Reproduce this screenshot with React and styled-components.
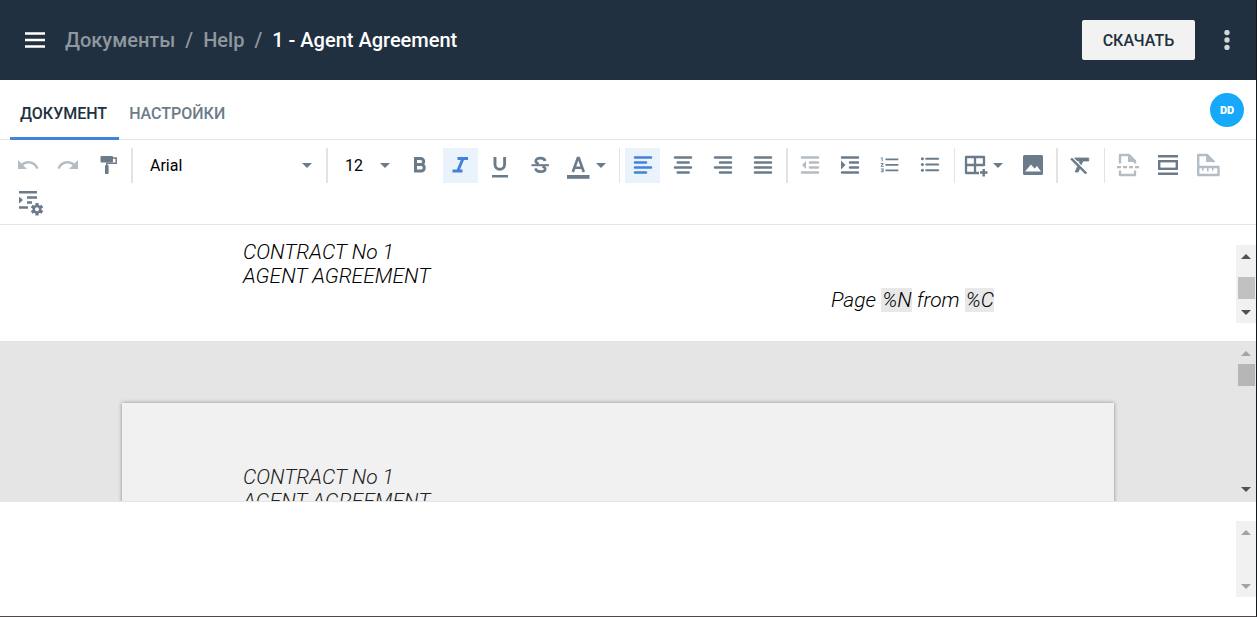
import React from "react";
import styled, { createGlobalStyle, css } from "styled-components";

const slate = "#6b7b8a";
const blue = "#4282d8";

const GlobalStyle = createGlobalStyle`
  *, *::before, *::after { box-sizing: border-box; }
  body {
    margin: 0;
    background: #fff;
    color: #000;
    font-family: Roboto, "Liberation Sans", sans-serif;
    font-size: 16px;
  }
  button, select { font: inherit; }
`;

const Shell = styled.div`
  display: flex;
  flex-direction: column;
  height: 100vh;
  border-right: 1px solid #15181b;
  border-bottom: 1px solid #4c484b;
`;

const TopBar = styled.header`
  display: flex;
  flex: none;
  align-items: center;
  height: 80px;
  padding: 0 19px 0 20px;
  background: #213040;
`;

const BareButton = styled.button`
  display: flex;
  align-items: center;
  justify-content: center;
  padding: 0;
  border: 0;
  background: none;
  cursor: pointer;
`;

const MenuButton = styled(BareButton)`
  width: 30px;
  height: 40px;
`;

const MoreButton = styled(BareButton)`
  width: 20px;
  height: 40px;
`;

const Breadcrumbs = styled.nav`
  flex: 1;
  display: flex;
  gap: 10px;
  margin-left: 15px;
  font-size: 20px;
  line-height: 24px;
  font-weight: 500;
  white-space: nowrap;
  color: #8f979f;
`;

const Crumb = styled.a`
  color: inherit;
  text-decoration: none;
`;

const CurrentCrumb = styled.span`
  color: #fff;
`;

const DownloadButton = styled.button`
  min-width: 113px;
  height: 40px;
  padding: 0 20px;
  margin-right: 22px;
  border: 0;
  border-radius: 2px;
  background: #f2f2f2;
  color: #213040;
  font-size: 16px;
  font-weight: 500;
  cursor: pointer;
`;

const TabBar = styled.div`
  display: flex;
  flex: none;
  align-items: center;
  justify-content: space-between;
  height: 60px;
  padding: 0 12px 0 10px;
  border-bottom: 1px solid #e5e5e5;
`;

const Tabs = styled.nav`
  display: flex;
  align-self: stretch;
`;

const Tab = styled.a`
  position: relative;
  padding: 0 12px 0 10px;
  line-height: 67px;
  font-size: 16px;
  font-weight: 500;
  text-decoration: none;
  color: ${(p) => (p.$active ? "#213040" : slate)};
  ${(p) =>
    p.$active &&
    css`
      &::after {
        content: "";
        position: absolute;
        left: 0;
        right: 0;
        top: 57px;
        height: 3px;
        background: ${blue};
      }
    `}
`;

const Avatar = styled.div`
  width: 34px;
  height: 34px;
  border-radius: 50%;
  background: #17a9f9;
  color: #fff;
  font-size: 11px;
  font-weight: 900;
  line-height: 35px;
  text-align: center;
`;

const Toolbar = styled.div`
  display: flex;
  flex: none;
  flex-wrap: wrap;
  gap: 2px 0;
  padding: 8px 10px 4px;
  border-bottom: 1px solid #e5e5e5;
`;

const Group = styled.div`
  display: flex;
  gap: 5px;
`;

const Separator = styled.div`
  width: ${(p) => (p.$thin ? 1 : 2)}px;
  height: 35px;
  margin: 0 5px 0 6px;
  background: #e3e3e3;
`;

const ToolButton = styled.button`
  display: flex;
  align-items: center;
  width: ${(p) => (p.$wide ? 50 : 35)}px;
  height: 35px;
  padding: 0;
  border: 0;
  background: ${(p) => (p.$active ? "#eaf2fc" : "transparent")};
  color: ${(p) => (p.$active ? blue : slate)};
  cursor: pointer;
  &:disabled svg { opacity: 0.5; }
  svg + svg { margin-left: -2px; }
`;

const SelectBox = styled.div`
  display: flex;
  position: relative;
  width: ${(p) => p.$width}px;
  height: 35px;
  svg {
    position: absolute;
    right: 8px;
    top: 15px;
    color: ${slate};
    pointer-events: none;
  }
`;

const Select = styled.select`
  appearance: none;
  width: 100%;
  padding: 0 20px 0 12px;
  border: 0;
  background: none;
  color: #000;
`;

const Pane = styled.section`
  display: flex;
  flex: none;
  height: ${(p) => p.$height}px;
`;

const Workspace = styled.main`
  display: flex;
  flex: 1;
  min-height: 0;
  background: #e5e5e5;
  border-bottom: 1px solid #e5e5e5;
`;

const PaneContent = styled.div`
  flex: 1;
  min-width: 0;
  overflow: hidden;
  padding: ${(p) => p.$top}px 122px 0;
`;

const textBlock = css`
  font-size: 21px;
  line-height: 24px;
  font-style: italic;
  font-weight: 300;
  p { margin: 0; }
`;

const HeaderText = styled.div`
  ${textBlock}
  padding: 0 120px 0 121px;
`;

const Sheet = styled.article`
  ${textBlock}
  height: 900px;
  padding: 62px 120px 0 121px;
  background: #f1f1f1;
  color: #222;
  box-shadow: 0 0 4px rgba(0, 0, 0, 0.4);
`;

const RightLine = styled.p`
  text-align: right;
`;

const Field = styled.span`
  display: inline-block;
  padding-left: 1px;
  background: #e8e8e8;
`;

const Track = styled.div`
  display: flex;
  flex-direction: column;
  align-items: center;
  width: 20px;
  padding: ${(p) => p.$pad}px 0;
  margin: ${(p) => p.$start}px 0 ${(p) => p.$end}px;
  background: ${(p) => (p.$plain ? "transparent" : "#f1f1f1")};
`;

const Arrow = styled(BareButton)`
  width: 20px;
  height: 10px;
  color: ${(p) => (p.disabled ? "#a3a3a3" : "#505050")};
`;

const Rail = styled.div`
  flex: 1;
  width: 17px;
  padding-top: ${(p) => p.$offset}px;
`;

const Thumb = styled.div`
  height: 22px;
  background: ${(p) => p.$color};
`;

function Scrollbar({ pad, start = 0, end = 0, offset, thumb, plain, upOff, downOff }) {
  return (
    <Track $pad={pad} $start={start} $end={end} $plain={plain}>
      <Arrow aria-label="Вверх" disabled={upOff}>
        <svg width="10" height="5" viewBox="0 0 10 5"><path d="M0 5L5 0l5 5z" fill="currentColor" /></svg>
      </Arrow>
      <Rail $offset={offset}>{thumb && <Thumb $color={thumb} />}</Rail>
      <Arrow aria-label="Вниз" disabled={downOff}>
        <svg width="10" height="5" viewBox="0 0 10 5"><path d="M0 0h10L5 5z" fill="currentColor" /></svg>
      </Arrow>
    </Track>
  );
}

const Caret = () => (
  <svg width="10" height="5" viewBox="0 0 10 5" aria-hidden="true">
    <path d="M0 0h10L5 5z" fill="currentColor" />
  </svg>
);

const stroke = { fill: "none", stroke: "currentColor" };

const icons = {
  undo: <path transform="translate(6 5)" d="M12.5 8c-2.65 0-5.05.99-6.9 2.6L2 7v9h9l-3.62-3.62c1.39-1.16 3.16-1.88 5.12-1.88 3.54 0 6.55 2.31 7.6 5.5l2.37-.78C21.08 11.03 17.15 8 12.5 8z" />,
  redo: <path transform="translate(6 5)" d="M18.4 10.6C16.55 8.99 14.15 8 11.5 8c-4.65 0-8.58 3.03-9.96 7.22L3.9 16c1.05-3.19 4.05-5.5 7.6-5.5 1.95 0 3.73.72 5.12 1.88L13 16h9V7l-3.6 3.6z" />,
  painter: <><rect x="10.5" y="8" width="12.5" height="6.5" rx="1" /><path {...stroke} strokeWidth="1.5" d="M23 10h3.2v5.2h-9.4V19" /><rect x="15" y="17" width="3.6" height="9" rx=".8" /></>,
  bold: <path {...stroke} strokeWidth="3" d="M12.5 10.500h5.200a3 3 0 0 1 0 6h-5.200zm0 6h6a3.300 3.300 0 0 1 0 6.500h-6z" />,
  italic: <path {...stroke} strokeWidth="3" d="M14.5 10.5H25M9.5 23h10M20 10.5L14.8 23" />,
  underline: <><path {...stroke} strokeWidth="2.9" d="M12 9v7.5a4.8 4.8 0 0 0 9.6 0V9" /><rect x="9" y="27" width="16" height="2.5" /></>,
  strike: <><path {...stroke} strokeWidth="2.7" d="M22 13c-.2-1.8-2-2.8-4.6-2.8-2.8 0-4.6 1-4.6 2.9 0 1.5 1.2 2.4 3 2.9M19.5 18.5c1.8.6 2.7 1.4 2.7 2.5 0 1.7-1.8 2.6-4.7 2.6-2.8 0-4.7-1.1-4.8-3.2" /><rect x="8.5" y="16.2" width="17.5" height="2" /></>,
  color: <><path {...stroke} strokeWidth="2.6" d="M9.8 24l5-14h1l5 14M11.5 19.8h7.6" /><rect x="4" y="27" width="22.5" height="3.8" /></>,
  left: <path {...stroke} strokeWidth="2.5" strokeLinecap="round" d="M10 9.5h16M10 14.5h11M10 19.5h16M10 24.5h11" />,
  center: <path {...stroke} strokeWidth="2.5" strokeLinecap="round" d="M10 9.5h16M12.7 14.5h11M10 19.5h16M12.7 24.5h11" />,
  right: <path {...stroke} strokeWidth="2.5" strokeLinecap="round" d="M10 9.5h16M15 14.5h11M10 19.5h16M15 24.5h11" />,
  justify: <path {...stroke} strokeWidth="2.5" strokeLinecap="round" d="M10 9.5h16M10 14.5h16M10 19.5h16M10 24.5h16" />,
  outdent: <><path {...stroke} strokeWidth="2.5" strokeLinecap="round" d="M9 9.5h16M17 14.5h8M17 19.5h8M9 24.5h16" /><path d="M13 13v8l-4-4z" /></>,
  indent: <><path {...stroke} strokeWidth="2.5" strokeLinecap="round" d="M9 9.5h16M17 14.5h8M17 19.5h8M9 24.5h16" /><path d="M8 12.5v9l4.5-4.5z" /></>,
  numbered: <path transform="translate(6 5.8) scale(.92)" d="M2 17h2v.5H3v1h1v.5H2v1h3v-4H2v1zm1-9h1V4H2v1h1v3zm-1 3h1.8L2 13.1v.9h3v-1H3.2L5 10.9V10H2v1zm5-6v2h14V5H7zm0 14h14v-2H7v2zm0-6h14v-2H7v2z" />,
  bullets: <><path {...stroke} strokeWidth="2" strokeLinecap="round" d="M13.2 10.8h12M13.2 16.5h12M13.2 22.3h12" /><circle cx="9.4" cy="10.8" r="1.5" /><circle cx="9.4" cy="16.5" r="1.5" /><circle cx="9.4" cy="22.3" r="1.5" /></>,
  table: <><path {...stroke} strokeWidth="2.3" strokeLinejoin="round" d="M19 25H6V9h18v9M6 17h18M15 9v16" /><path {...stroke} strokeWidth="2.4" d="M20 24.5h7.5M23.7 21v7.5" /></>,
  image: <path fillRule="evenodd" d="M9.5 7h17A1.5 1.5 0 0 1 28 8.5v17a1.5 1.5 0 0 1-1.5 1.5h-17A1.5 1.5 0 0 1 8 25.5v-17A1.5 1.5 0 0 1 9.5 7zM10 23.5h16l-4-5.500-2.500 2.500-3.500-4z" />,
  clear: <path transform="translate(5.700 5)" stroke="currentColor" strokeWidth=".8" d="M3.270 5L2 6.270l6.970 6.970L6.500 19h3l1.570-3.660L16.730 21 18 19.730 3.550 5.270 3.270 5zM6 5v.180L8.820 8h2.400l-.720 1.680 2.100 2.100L14.210 8H20V5H6z" />,
  pageBreak: <><path {...stroke} strokeWidth="2.400" strokeLinejoin="round" d="M10 15.500V7h9l6 6v2.500M10 22.500V27h15v-4.500" /><path d="M18 6.500V14h7.500zM7 18h4v2.200H7zm6 0h4v2.200h-4zm6 0h4v2.200h-4zm6 0h4v2.200h-4z" /></>,
  headerFooter: <><path d="M8 7h20v2.500H8zM8 24.500h20V27H8z" /><rect {...stroke} x="9.200" y="13.200" width="17.600" height="7.600" strokeWidth="2.400" /></>,
  pageNumber: <><path {...stroke} strokeWidth="2.400" strokeLinejoin="round" d="M8.200 18V7h9l7 7M8.200 19h20.300v8H8.200z" /><path d="M16 6.500V14h8zM12 20h1.600v2.600H12zm5 0h1.600v3.600H17zm5 0h1.600v2.600H22z" /></>,
  paragraph: <>
    <path {...stroke} strokeWidth="2.400" d="M9 7.300h18M17 12.500h10M17 17.500h5M9 22.500h9" />
    <path d="M9 11.500v7l4-3.500z" />
    <path {...stroke} strokeWidth="3.200" d="M27 18v12.400M21.600 21.100l10.800 6.200M21.600 27.300l10.800-6.200" />
    <circle {...stroke} cx="27" cy="24.200" r="3.200" strokeWidth="2.600" />
    <circle cx="27" cy="24.200" r="2" fill="#fff" />
  </>,
};

function Tool({ name, label, active, disabled, menu }) {
  return (
    <ToolButton aria-label={label} $active={active} $wide={menu} disabled={disabled}>
      <svg width="35" height="35" viewBox="0 0 35 35" fill="currentColor" overflow="visible" aria-hidden="true">
        {icons[name]}
      </svg>
      {menu && <Caret />}
    </ToolButton>
  );
}

export default function App() {
  return (
    <Shell>
      <GlobalStyle />
      <TopBar>
        <MenuButton aria-label="Меню">
          <svg width="20" height="16" viewBox="0 0 20 16" fill="#fff">
            <path d="M0 .300h20v2.500H0zM0 6.800h20v2.500H0zM0 13.200h20v2.500H0z" />
          </svg>
        </MenuButton>
        <Breadcrumbs>
          <Crumb href="#documents">Документы</Crumb>
          <span>/</span>
          <Crumb href="#help">Help</Crumb>
          <span>/</span>
          <CurrentCrumb>1 - Agent Agreement</CurrentCrumb>
        </Breadcrumbs>
        <DownloadButton>СКАЧАТЬ</DownloadButton>
        <MoreButton aria-label="Ещё">
          <svg width="6" height="20" viewBox="0 0 6 20" fill="#d3d6d9">
            <circle cx="3" cy="2.500" r="2.700" />
            <circle cx="3" cy="10" r="2.700" />
            <circle cx="3" cy="17.500" r="2.700" />
          </svg>
        </MoreButton>
      </TopBar>

      <TabBar>
        <Tabs>
          <Tab href="#document" $active>ДОКУМЕНТ</Tab>
          <Tab href="#settings">НАСТРОЙКИ</Tab>
        </Tabs>
        <Avatar>DD</Avatar>
      </TabBar>

      <Toolbar>
        <Group>
          <Tool name="undo" label="Отменить" disabled />
          <Tool name="redo" label="Повторить" disabled />
          <Tool name="painter" label="Формат по образцу" />
        </Group>
        <Separator />
        <SelectBox $width={182}>
          <Select aria-label="Шрифт" defaultValue="Arial">
            <option>Arial</option>
          </Select>
          <Caret />
        </SelectBox>
        <Separator />
        <Group>
          <SelectBox $width={65}>
            <Select aria-label="Размер" defaultValue="12">
              <option>12</option>
            </Select>
            <Caret />
          </SelectBox>
          <Tool name="bold" label="Полужирный" />
          <Tool name="italic" label="Курсив" active />
          <Tool name="underline" label="Подчёркнутый" />
          <Tool name="strike" label="Зачёркнутый" />
          <Tool name="color" label="Цвет текста" menu />
        </Group>
        <Separator $thin />
        <Group>
          <Tool name="left" label="По левому краю" active />
          <Tool name="center" label="По центру" />
          <Tool name="right" label="По правому краю" />
          <Tool name="justify" label="По ширине" />
        </Group>
        <Separator />
        <Group>
          <Tool name="outdent" label="Уменьшить отступ" disabled />
          <Tool name="indent" label="Увеличить отступ" />
          <Tool name="numbered" label="Нумерованный список" />
          <Tool name="bullets" label="Маркированный список" />
        </Group>
        <Separator $thin />
        <Group>
          <Tool name="table" label="Таблица" menu />
          <Tool name="image" label="Изображение" />
        </Group>
        <Separator />
        <Tool name="clear" label="Очистить формат" />
        <Separator $thin />
        <Group>
          <Tool name="pageBreak" label="Разрыв страницы" disabled />
          <Tool name="headerFooter" label="Колонтитулы" />
          <Tool name="pageNumber" label="Номер страницы" disabled />
        </Group>
        <Tool name="paragraph" label="Настройки абзаца" />
      </Toolbar>

      <Pane $height={116}>
        <PaneContent $top={15}>
          <HeaderText>
            <p>CONTRACT No 1</p>
            <p>AGENT AGREEMENT</p>
            <RightLine>
              Page <Field>%N</Field> from <Field>%C</Field>
            </RightLine>
          </HeaderText>
        </PaneContent>
        <Scrollbar pad={6} start={20} end={18} offset={16} thumb="#c1c1c1" />
      </Pane>

      <Workspace>
        <PaneContent $top={62}>
          <Sheet>
            <p>CONTRACT No 1</p>
            <p>AGENT AGREEMENT</p>
          </Sheet>
        </PaneContent>
        <Scrollbar pad={7} offset={6} thumb="#b6b6b6" plain upOff />
      </Workspace>

      <Pane $height={114}>
        <PaneContent $top={15} />
        <Scrollbar pad={6} start={19} end={19} offset={0} upOff downOff />
      </Pane>
    </Shell>
  );
}
